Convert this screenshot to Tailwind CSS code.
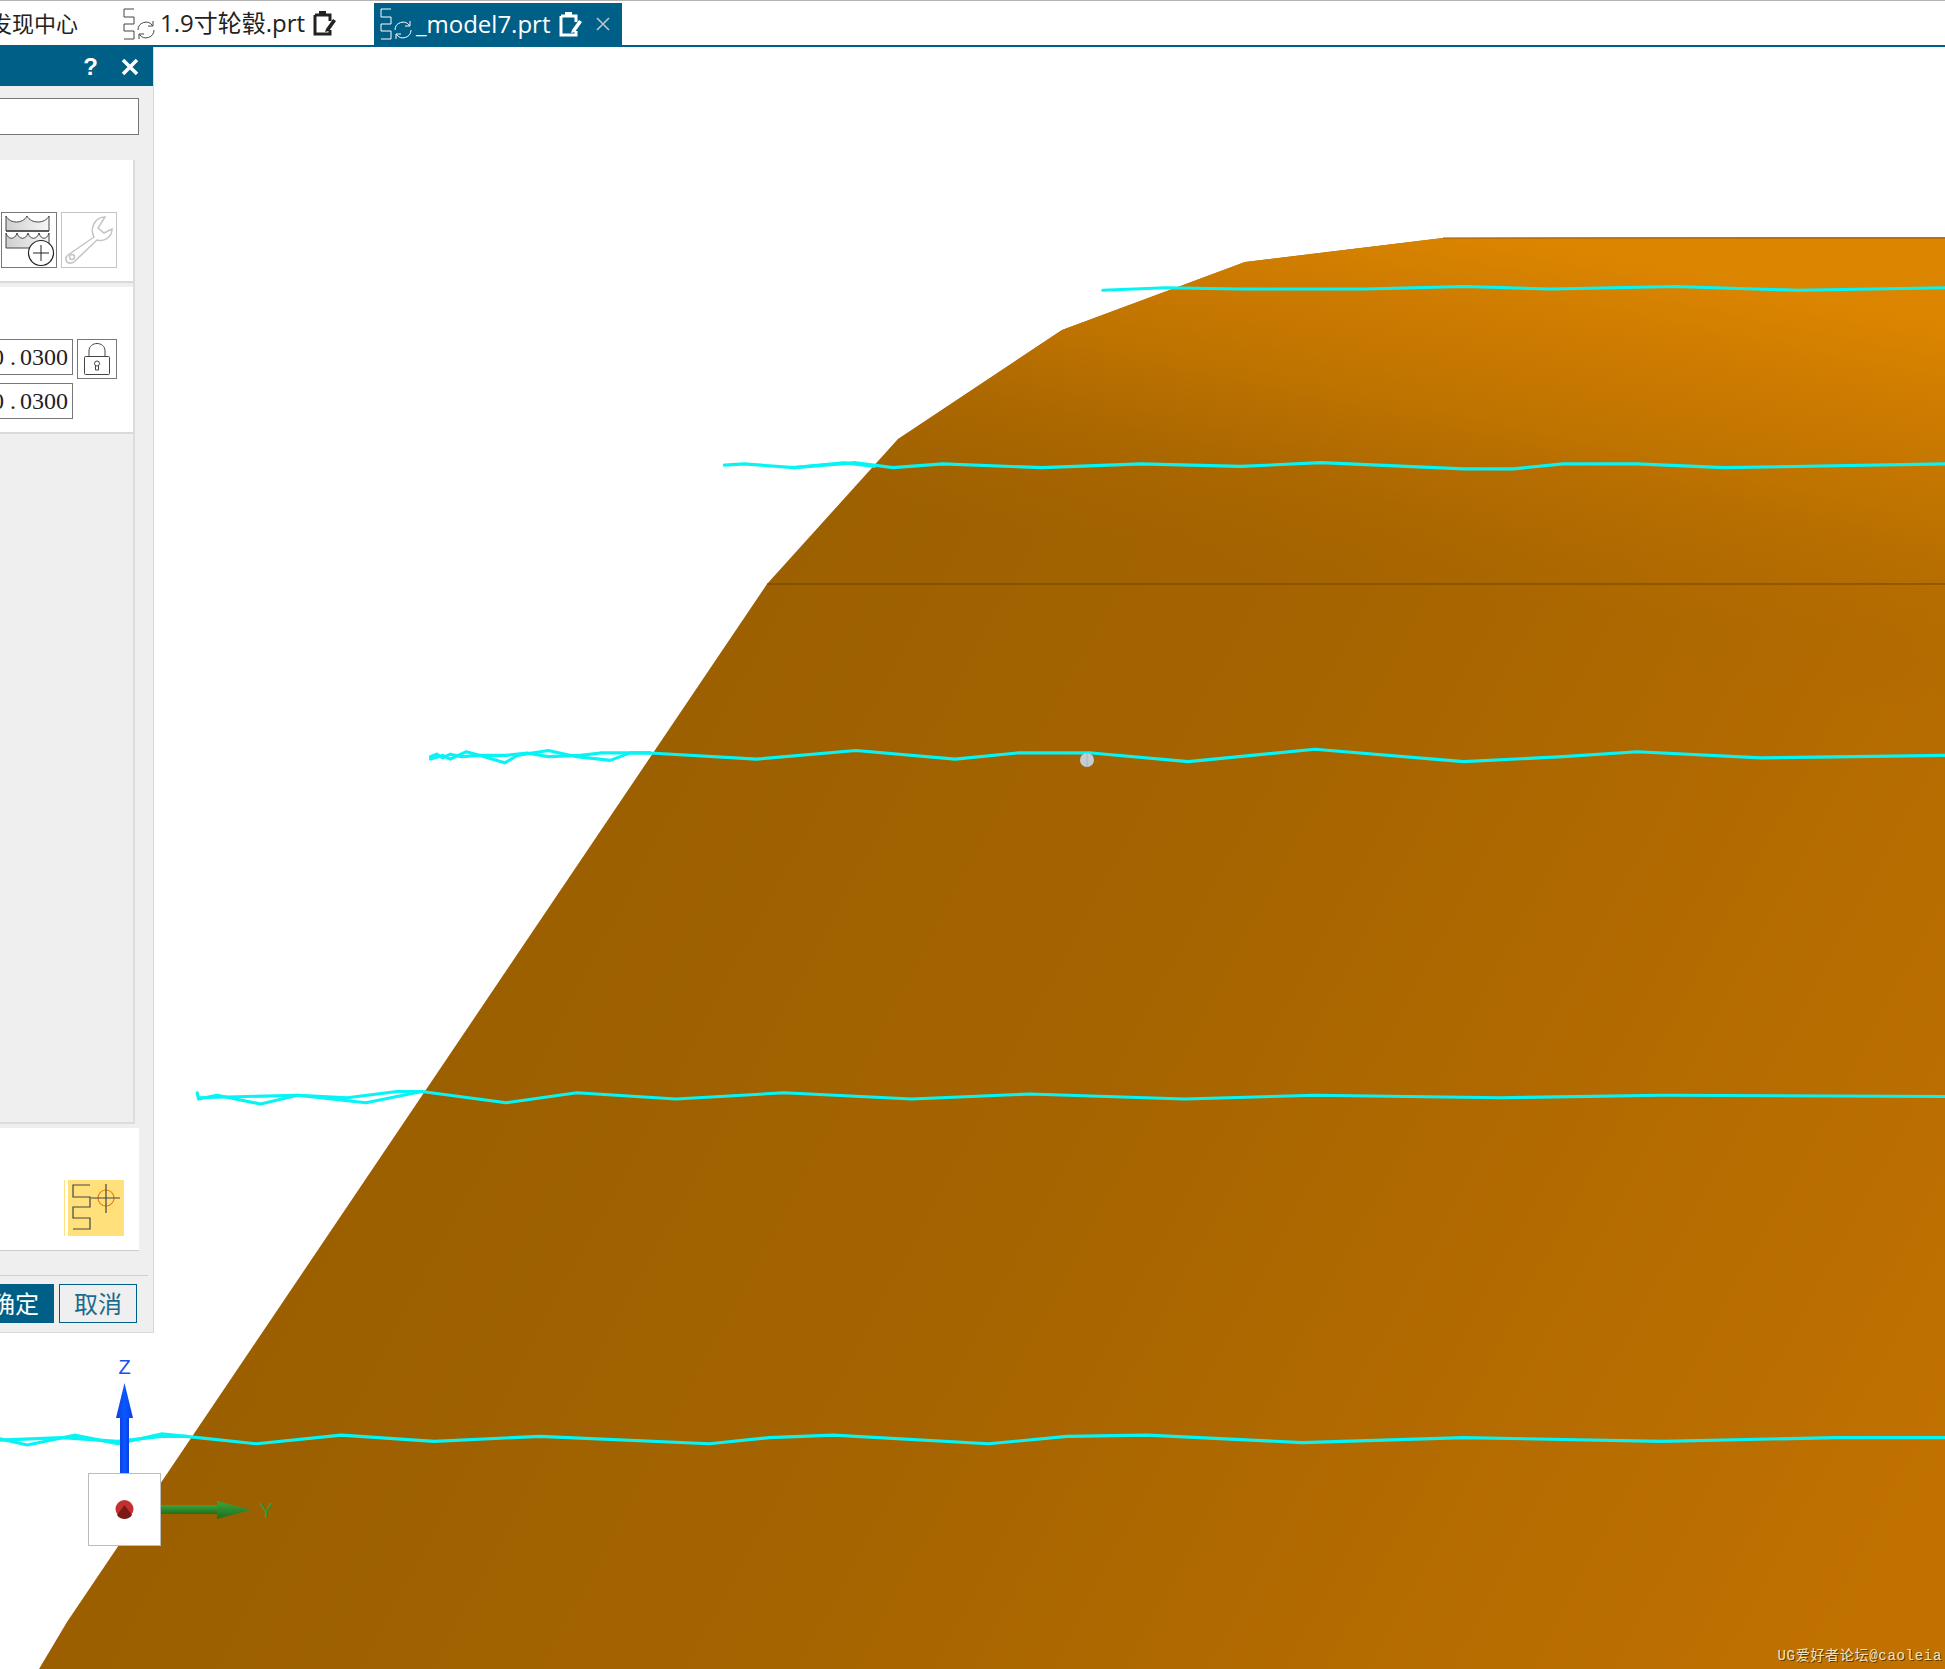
<!DOCTYPE html>
<html lang="zh">
  <head>
    <meta charset="UTF-8" />
    <title>_model7.prt</title>
    <script src="https://cdn.jsdelivr.net/npm/@tailwindcss/browser@4"></script>
  </head>
  <body class="bg-white">
    <div class="relative w-[1945px] h-[1669px] overflow-hidden font-['Open_Sans','Noto_Sans_CJK_SC',sans-serif]">
      <!-- 3D viewport -->
      <svg class="absolute inset-0" width="1945" height="1669" viewBox="0 0 1945 1669">
        <defs>
          <linearGradient id="body" gradientUnits="userSpaceOnUse" x1="300" y1="900" x2="1800" y2="1700">
            <stop offset="0" stop-color="#995e00" />
            <stop offset="0.45" stop-color="#a56400" />
            <stop offset="1" stop-color="#c07100" />
          </linearGradient>
          <linearGradient id="glow" gradientUnits="userSpaceOnUse" x1="1520" y1="220" x2="1440" y2="620">
            <stop offset="0.04" stop-color="#dc8500" />
            <stop offset="0.5" stop-color="#c27500" stop-opacity="0.85" />
            <stop offset="1" stop-color="#a86600" stop-opacity="0" />
          </linearGradient>
          <linearGradient id="blueArrow" x1="0" x2="1" y1="0" y2="0">
            <stop offset="0" stop-color="#0a3fe0" />
            <stop offset="0.5" stop-color="#0a58ff" />
            <stop offset="1" stop-color="#0a3fe0" />
          </linearGradient>
          <linearGradient id="greenArrow" x1="0" x2="0" y1="0" y2="1">
            <stop offset="0" stop-color="#3aa53a" />
            <stop offset="1" stop-color="#1f6e1f" />
          </linearGradient>
        </defs>
        <polygon points="1443,238 1945,237 1945,1669 39,1669 67,1622 767,584 898,439 1062,330 1245,262" fill="url(#body)" />
        <polygon points="1443,238 1945,237 1945,1669 39,1669 67,1622 767,584 898,439 1062,330 1245,262" fill="url(#glow)" />
        <path d="M1443 238H1945" stroke="#94600a" stroke-width="1" />
        <path d="M767 584H1945" stroke="#6e4500" stroke-width="1.2" />
        <g transform="scale(1.2404)" fill="none" stroke="#08f4f4" stroke-width="2.5" stroke-linejoin="round" stroke-linecap="round">
          <polyline points="889,234 940,232 1000,233 1100,233 1180,231 1250,233 1350,231 1450,234 1568,232" />
          <polyline points="584,375 600,374 640,377 690,373 720,377 760,374 840,377 920,374 1000,376 1065,373 1180,378 1220,378 1260,374 1320,374 1390,377 1568,374" />
          <polyline points="640,377 680,373 705,376" />
          <polyline points="524,607 610,612 690,605 770,612 820,607 880,607 958,614 1060,604 1180,614 1260,610 1320,606 1420,611 1568,609" />
          <polyline points="347,610 352,608 357,611 363,608 372,610 387,609 407,615 417,609 442,605 465,610 492,613 508,607 524,607" />
          <polyline points="347,612 357,609 363,612 376,606 387,609 408,609 425,607 442,610 468,609 484,607 508,607 524,607" />
          <polyline points="340,880 408,889 465,881 545,886 632,881 735,886 830,882 955,886 1060,883 1210,885 1340,883 1568,884" />
          <polyline points="159,881 160,886 175,883 210,890 240,883 295,889 340,880" />
          <polyline points="160,885 240,883 280,885 320,880 340,880" />
          <polyline points="150,1158 207,1164 275,1157 350,1162 435,1158 572,1164 620,1159 672,1157 797,1164 860,1158 925,1157 1050,1163 1180,1159 1340,1162 1480,1159 1568,1159" />
          <polyline points="0,1160 22,1165 60,1157 95,1164 130,1156 150,1158" />
          <polyline points="0,1161 50,1159 95,1162 130,1158 150,1158" />
        </g>
        <circle cx="1087" cy="760" r="7" fill="#c4cdd4" />
        <path d="M1087 753V767" stroke="#aab4bc" stroke-width="1" />
        <!-- WCS triad -->
        <rect x="120" y="1416" width="9" height="58" fill="url(#blueArrow)" />
        <polygon points="124.500,1383 116,1418 133,1418" fill="url(#blueArrow)" />
        <text x="124.500" y="1374" text-anchor="middle" font-size="20" fill="#1c50ee" font-family="Liberation Sans">Z</text>
        <rect x="88.500" y="1473.500" width="72" height="72" fill="#fff" stroke="#bcbcbc" stroke-width="1" />
        <circle cx="124.500" cy="1509" r="9" fill="#c43030" />
        <path d="M117 1515 L124.500 1505 L132 1515 A9 9 0 0 1 117 1515Z" fill="#7a1717" />
        <rect x="161" y="1505" width="57" height="9" fill="url(#greenArrow)" />
        <polygon points="217,1501 251,1510 217,1519" fill="url(#greenArrow)" />
        <text x="266" y="1518" text-anchor="middle" font-size="22" fill="#2f9a33" font-family="Liberation Sans">Y</text>
      </svg>

      <!-- Tab bar -->
      <div class="relative flex items-end h-[47px] border-t border-[#b4b4b4] border-b-2 border-b-[#005f87] bg-white text-[#222] text-[24px] leading-none">
        <div class="w-[123px] h-full flex items-center justify-end pr-[45px] overflow-hidden whitespace-nowrap text-[22px]">
          <span class="shrink-0">发现中心</span>
        </div>
        <div class="w-[251px] h-full flex items-center">
          <svg width="34" height="32" viewBox="0 0 34 32" class="shrink-0 mt-[2px]" fill="none" stroke="#444" stroke-width="1">
            <path d="M11 1H1V9H11V16H1V23H11V31H1" />
            <path d="M15 22a8 8 0 0 1 14.500-4.500M31 22a8 8 0 0 1-14.500 4.500" />
            <path d="M30 13V18H25M16 31V26H21" />
          </svg>
          <span class="ml-[3px] whitespace-nowrap">1.9寸轮毂.prt</span>
          <svg width="24" height="26" viewBox="0 0 24 26" class="ml-[8px] shrink-0">
            <path d="M2 5H17V11M17 20V24H2V5" fill="none" stroke="#222" stroke-width="3" />
            <rect x="6" y="1" width="7" height="5" fill="#222" />
            <path d="M13 19L20 9L23 11L16 21L12 22Z" fill="#222" />
          </svg>
        </div>
        <div class="w-[248px] h-[42px] bg-[#005f87] text-white flex items-center">
          <svg width="34" height="32" viewBox="0 0 34 32" class="ml-[6px] shrink-0" fill="none" stroke="#fff" stroke-width="1">
            <path d="M11 1H1V9H11V16H1V23H11V31H1" />
            <path d="M15 22a8 8 0 0 1 14.500-4.500M31 22a8 8 0 0 1-14.500 4.500" />
            <path d="M30 13V18H25M16 31V26H21" />
          </svg>
          <span class="ml-[2px] whitespace-nowrap">_model7.prt</span>
          <svg width="24" height="26" viewBox="0 0 24 26" class="ml-[9px] shrink-0">
            <path d="M2 5H17V11M17 20V24H2V5" fill="none" stroke="#fff" stroke-width="3" />
            <rect x="6" y="1" width="7" height="5" fill="#fff" />
            <path d="M13 19L20 9L23 11L16 21L12 22Z" fill="#fff" />
          </svg>
          <svg width="14" height="14" viewBox="0 0 14 14" class="ml-[13px] shrink-0" stroke="#b8c8d0" stroke-width="1.600">
            <path d="M1 1L13 13M13 1L1 13" />
          </svg>
        </div>
      </div>

      <!-- Dialog, left part cut off by the crop -->
      <div class="relative w-[154px] h-[1286px] bg-[#efefef] border-r border-b border-[#d8d8d8] flex flex-col overflow-hidden">
        <div class="h-[39px] shrink-0 bg-[#005f87] flex items-center justify-end pr-[14px] gap-[23px] text-white font-bold text-[24px] font-['Liberation_Sans']">
          <span>?</span>
          <svg width="18" height="18" viewBox="0 0 18 18" stroke="#fff" stroke-width="3.500"><path d="M2 2L16 16M16 2L2 16" /></svg>
        </div>
        <div class="mt-[12px] mr-[14px] -ml-[2px] h-[37px] shrink-0 bg-white border border-[#777]"></div>
        <!-- group box -->
        <div class="mt-[25px] mr-[18px] h-[964px] shrink-0 border-r-2 border-[#dcdcdc] flex flex-col">
          <div class="h-[123px] bg-white border-b-2 border-[#d9d9d9] flex items-end gap-[4px] pl-[1px] pb-[13px]">
            <div class="w-[56px] h-[56px] border border-[#777]">
              <svg width="54" height="54" viewBox="0 0 54 54" fill="none" stroke="#444" stroke-width="1">
                <defs>
                  <linearGradient id="water" x1="0" x2="1" y1="0" y2="0">
                    <stop offset="0" stop-color="#cfcfcf" />
                    <stop offset="1" stop-color="#f6f6f6" />
                  </linearGradient>
                </defs>
                <path d="M4 3C8 11 21 11 25 3C29 11 43 11 47 3V18H4Z" fill="url(#water)" />
                <path d="M4 18H47" stroke-width="1.600" />
                <path d="M4 20C6 27 13 27 15 20C17 27 24 27 26 20C28 27 35 27 37 20C39 27 45 27 47 20V35H4Z" fill="url(#water)" />
                <circle cx="39" cy="40" r="12.500" fill="#fff" stroke="#222" stroke-width="1.200" />
                <path d="M39 32V48M31 40H47" stroke="#222" />
              </svg>
            </div>
            <div class="w-[56px] h-[56px] border border-[#c4c4c4]">
              <svg width="54" height="54" viewBox="0 0 54 54" fill="none" stroke="#c4c4c4" stroke-width="1.500">
                <path d="M32 24L6 42C2 45 4 51 9 50C11 50 12 49 13 48L35 27C41 29 50 25 50 16L42 20L36 15L43 4C34 4 27 14 32 24Z" />
                <circle cx="10" cy="44" r="2.500" />
              </svg>
            </div>
          </div>
          <div class="mt-[4px] h-[147px] bg-white border-b-2 border-[#d9d9d9] flex flex-col justify-end pb-[13px] gap-[8px] font-['Liberation_Serif'] text-[24px] leading-none text-[#222] [word-spacing:-2px]">
            <div class="flex items-start gap-[4px] h-[36px]">
              <div class="w-[73px] h-[36px] border-y border-r border-[#777] flex items-center justify-end pr-[4px] overflow-hidden whitespace-pre">
                <span class="shrink-0"><span class="mr-[6px]">0</span>. 0300</span>
              </div>
              <div class="w-[40px] h-[40px] border border-[#777] flex items-center justify-center">
                <svg width="28" height="34" viewBox="0 0 28 34" fill="none" stroke="#444" stroke-width="1">
                  <path d="M6 14V9C6 -1 22 -1 22 9V14" />
                  <rect x="1.500" y="14.500" width="25" height="18" rx="1" />
                  <circle cx="14" cy="21.500" r="2.500" />
                  <path d="M12.500 24V28H15.500V24" />
                </svg>
              </div>
            </div>
            <div class="w-[73px] h-[36px] border-y border-r border-[#777] flex items-center justify-end pr-[4px] overflow-hidden whitespace-pre">
              <span class="shrink-0"><span class="mr-[6px]">0</span>. 0300</span>
            </div>
          </div>
          <div class="flex-1 bg-[#efefef]"></div>
        </div>
        <div class="h-[2px] mr-[18px] -mt-[2px] shrink-0 bg-[#dcdcdc]"></div>
        <!-- selection card -->
        <div class="mt-[4px] mr-[14px] h-[123px] shrink-0 bg-white border-b border-[#ccc] flex items-end justify-end pr-[15px] pb-[14px]">
          <div class="flex gap-[3px] h-[56px]">
            <div class="w-[1px] bg-[#ffe082]"></div>
            <div class="w-[56px] bg-[#ffe07a]">
              <svg width="56" height="56" viewBox="0 0 56 56" fill="none" stroke="#444" stroke-width="1.200">
                <path d="M22 5H5V17H22V27H5V38H22V49H5" />
                <circle cx="38" cy="18" r="8" stroke="#ee7f12" />
                <path d="M23 18H52M38 4V33" />
              </svg>
            </div>
          </div>
        </div>
        <div class="mt-[24px] mr-[5px] h-[1px] shrink-0 bg-[#d0d0d0]"></div>
        <div class="mt-[8px] pr-[16px] flex justify-end gap-[5px] text-[24px] leading-none">
          <div class="w-[78px] h-[39px] shrink-0 bg-[#005f87] text-white flex items-center justify-center">确定</div>
          <div class="w-[78px] h-[39px] shrink-0 border border-[#005f87] text-[#1c6a8d] flex items-center justify-center">取消</div>
        </div>
      </div>

      <div class="absolute right-[3px] bottom-[6px] text-[14px] leading-none tracking-[0.7px] whitespace-nowrap text-[#f3e2c2] font-['Liberation_Mono','Noto_Sans_CJK_SC',monospace] [text-shadow:1px_1px_0_#5c3a00]">UG爱好者论坛@caoleia</div>
    </div>
  </body>
</html>
